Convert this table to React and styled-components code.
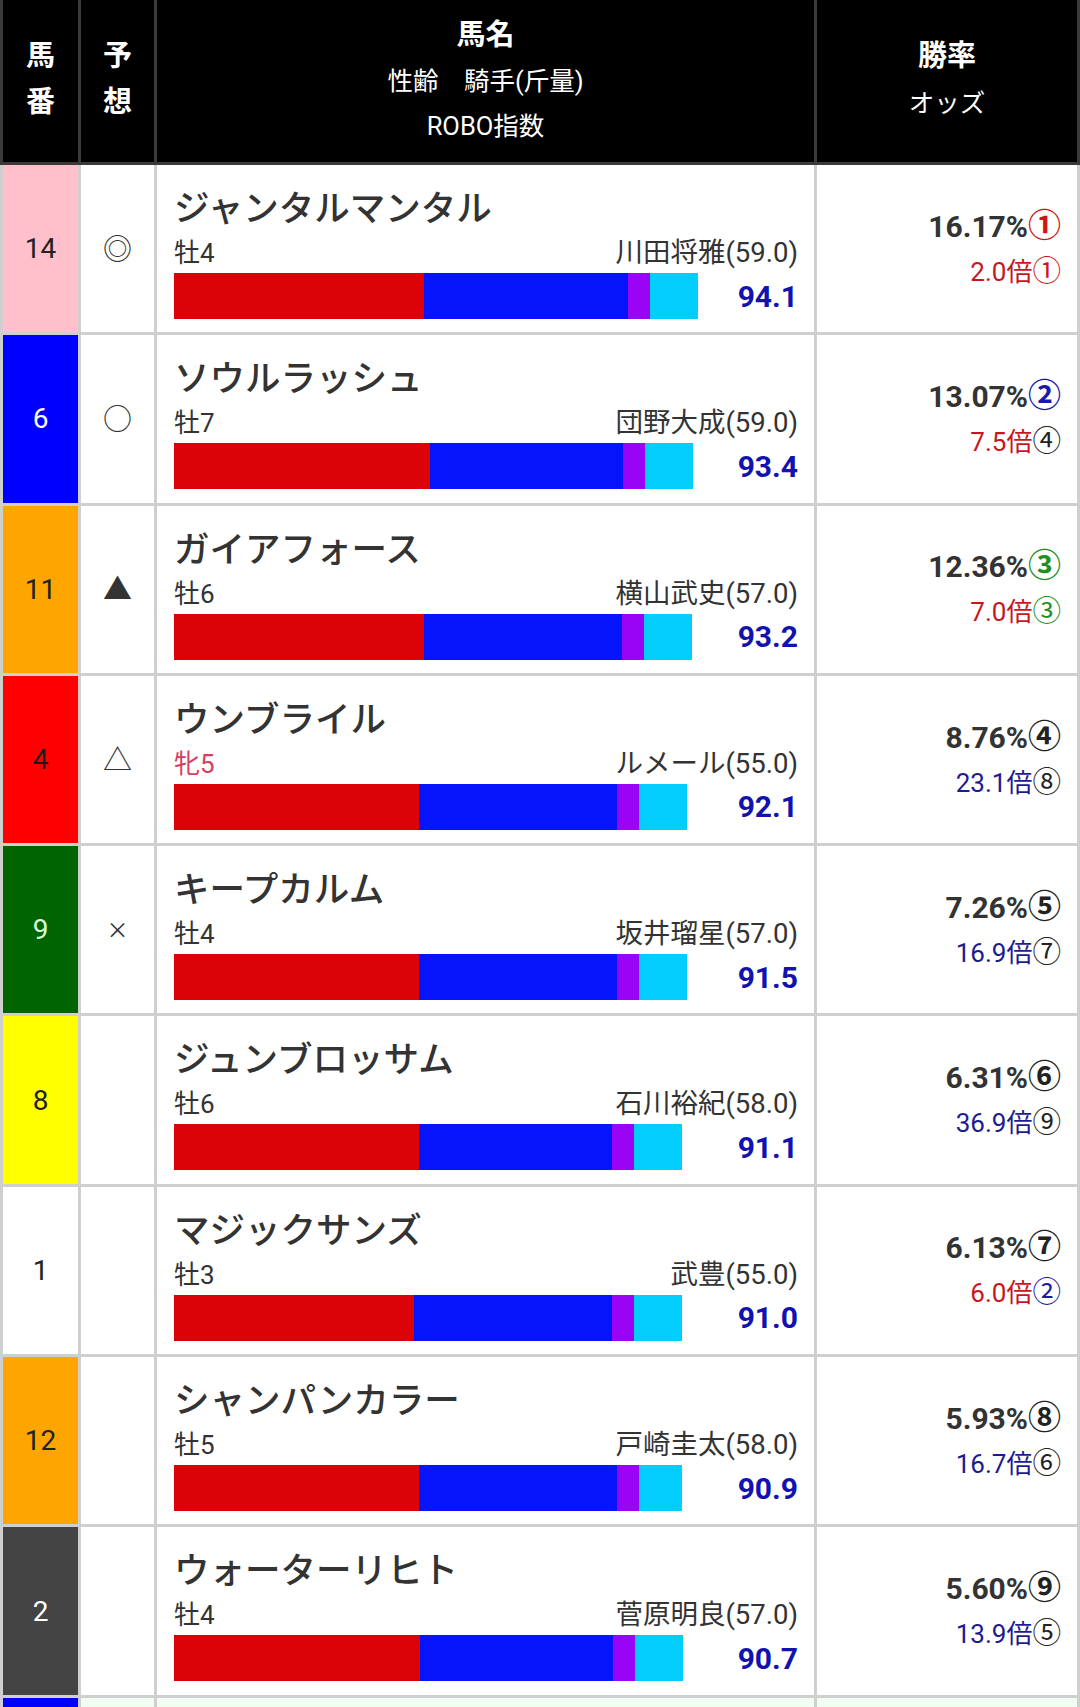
import styled, { createGlobalStyle } from 'styled-components'

const GlobalStyle = createGlobalStyle`
  body {
    margin: 0;
    background: #fff;
    font-family: Roboto, "Noto Sans CJK JP", sans-serif;
  }
`

const COLS = '75px 73px 657px 260px'

const FRAMES = {
  pink: { bg: '#ffc0cb', fg: '#222' },
  blue: { bg: '#0000ff', fg: '#fff' },
  orange: { bg: '#ffa500', fg: '#222' },
  red: { bg: '#ff0000', fg: '#1a1a1a' },
  green: { bg: '#006400', fg: '#d8ffd8' },
  yellow: { bg: '#ffff00', fg: '#222' },
  white: { bg: '#ffffff', fg: '#222' },
  black: { bg: '#444444', fg: '#fff' },
}

const RANK_COLORS = { 1: '#d01515', 2: '#1a1aa8', 3: '#1f8f1f' }

const horses = [
  { no: 14, frame: 'pink', mark: '◎', name: 'ジャンタルマンタル', sex: '牡4', jockey: '川田将雅(59.0)', score: '94.1', bars: [250, 204, 22, 48], rate: '16.17%', rank: 1, odds: 2.0, pop: 1 },
  { no: 6, frame: 'blue', mark: '○', name: 'ソウルラッシュ', sex: '牡7', jockey: '団野大成(59.0)', score: '93.4', bars: [256, 193, 22, 48], rate: '13.07%', rank: 2, odds: 7.5, pop: 4 },
  { no: 11, frame: 'orange', mark: '▲', name: 'ガイアフォース', sex: '牡6', jockey: '横山武史(57.0)', score: '93.2', bars: [250, 198, 22, 48], rate: '12.36%', rank: 3, odds: 7.0, pop: 3 },
  { no: 4, frame: 'red', mark: '△', name: 'ウンブライル', sex: '牝5', jockey: 'ルメール(55.0)', score: '92.1', bars: [245, 198, 22, 48], rate: '8.76%', rank: 4, odds: 23.1, pop: 8 },
  { no: 9, frame: 'green', mark: '×', name: 'キープカルム', sex: '牡4', jockey: '坂井瑠星(57.0)', score: '91.5', bars: [245, 198, 22, 48], rate: '7.26%', rank: 5, odds: 16.9, pop: 7 },
  { no: 8, frame: 'yellow', mark: '', name: 'ジュンブロッサム', sex: '牡6', jockey: '石川裕紀(58.0)', score: '91.1', bars: [245, 193, 22, 48], rate: '6.31%', rank: 6, odds: 36.9, pop: 9 },
  { no: 1, frame: 'white', mark: '', name: 'マジックサンズ', sex: '牡3', jockey: '武豊(55.0)', score: '91.0', bars: [240, 198, 22, 48], rate: '6.13%', rank: 7, odds: 6.0, pop: 2 },
  { no: 12, frame: 'orange', mark: '', name: 'シャンパンカラー', sex: '牡5', jockey: '戸崎圭太(58.0)', score: '90.9', bars: [245, 198, 22, 43], rate: '5.93%', rank: 8, odds: 16.7, pop: 6 },
  { no: 2, frame: 'black', mark: '', name: 'ウォーターリヒト', sex: '牡4', jockey: '菅原明良(57.0)', score: '90.7', bars: [246, 193, 22, 48], rate: '5.60%', rank: 9, odds: 13.9, pop: 5 },
]

const BAR_COLORS = ['#dc0308', '#0514fa', '#9a04f6', '#02cdfb']

const circled = n => String.fromCharCode(0x2460 + n - 1)

const Table = styled.div`
  width: 1080px;
`

const HeaderRow = styled.div`
  display: grid;
  grid-template-columns: ${COLS};
  column-gap: 3px;
  background: #3a3a3a;
  padding: 0 3px 3px 3px;
  height: 165px;
  box-sizing: border-box;
`

const HeadCell = styled.div`
  background: #000;
  color: #fff;
  display: flex;
  flex-direction: column;
  align-items: center;
  justify-content: center;
  line-height: ${props => props.$lh || 46}px;
  padding-bottom: ${props => props.$pb || 0}px;
`

const HeadTitle = styled.div`
  font-family: "Noto Sans CJK JP", sans-serif;
  font-size: 29px;
  font-weight: 700;
  margin-bottom: ${props => props.$mb || 0}px;
`

const HeadSub = styled.div`
  font-size: 25.5px;
  font-weight: 400;
  white-space: pre;
`

const Row = styled.div`
  display: grid;
  grid-template-columns: ${COLS};
  column-gap: 3px;
  background: #cfcfcf;
  padding: 0 3px 3px 3px;
  height: 170.3px;
  box-sizing: border-box;
`

const Cell = styled.div`
  background: ${props => props.$bg || '#fff'};
  min-width: 0;
`

const FrameCell = styled(Cell)`
  display: flex;
  align-items: center;
  justify-content: center;
  color: ${props => props.$fg};
  font-size: 28px;
`

const MarkCell = styled(Cell)`
  display: flex;
  align-items: center;
  justify-content: center;
  font-family: "Noto Sans CJK JP", sans-serif;
  font-size: ${props => (props.$small ? 22 : 29)}px;
  color: #333;
  padding-bottom: 4px;
`

const HorseCell = styled(Cell)`
  padding: 17px 16px 0 17px;
  color: #333;
`

const HorseName = styled.div`
  font-family: "Noto Sans CJK JP", sans-serif;
  font-size: 35.5px;
  font-weight: 500;
  line-height: 48px;
  white-space: nowrap;
`

const InfoLine = styled.div`
  display: flex;
  justify-content: space-between;
  align-items: center;
  margin-top: 7px;
  height: 32px;
  font-size: 26px;
  line-height: 32px;
`

const Sex = styled.span`
  color: ${props => (props.$female ? '#d6405f' : '#333')};
`

const Jockey = styled.span`
  font-size: 27.5px;
`

const BarLine = styled.div`
  display: flex;
  justify-content: space-between;
  align-items: center;
  margin-top: 4px;
`

const Bar = styled.div`
  display: flex;
  height: 46px;
`

const Segment = styled.div`
  height: 100%;
  background: ${props => props.$color};
`

const Score = styled.span`
  font-size: 30px;
  font-weight: 700;
  color: #1212b0;
`

const RateCell = styled(Cell)`
  display: flex;
  flex-direction: column;
  align-items: flex-end;
  justify-content: center;
  padding: 4px 16px 0 0;
`

const Rate = styled.div`
  font-size: 30px;
  font-weight: 700;
  color: #333;
  line-height: 40px;
`

const Odds = styled.div`
  font-size: 26px;
  line-height: 45px;
  padding-top: 3px;
  color: ${props => props.$color};
`

const Circle = styled.span`
  font-family: "Noto Sans CJK JP", sans-serif;
  font-size: 1.1em;
  line-height: 0;
  color: ${props => props.$color};
  font-weight: ${props => (props.$bold ? 700 : 400)};
`

const HorseRow = ({ h }) => {
  const frame = FRAMES[h.frame]
  return (
    <Row>
      <FrameCell $bg={frame.bg} $fg={frame.fg}>{h.no}</FrameCell>
      <MarkCell $small={h.mark === '×'}>{h.mark}</MarkCell>
      <HorseCell>
        <HorseName>{h.name}</HorseName>
        <InfoLine>
          <Sex $female={h.sex.startsWith('牝')}>{h.sex}</Sex>
          <Jockey>{h.jockey}</Jockey>
        </InfoLine>
        <BarLine>
          <Bar>
            {h.bars.map((w, i) => (
              <Segment key={i} $color={BAR_COLORS[i]} style={{ width: w }} />
            ))}
          </Bar>
          <Score>{h.score}</Score>
        </BarLine>
      </HorseCell>
      <RateCell>
        <Rate>
          {h.rate}
          <Circle $bold $color={RANK_COLORS[h.rank] || '#222'}>{circled(h.rank)}</Circle>
        </Rate>
        <Odds $color={h.odds < 10 ? '#c8161e' : '#1c1c90'}>
          {h.odds.toFixed(1)}倍
          <Circle $color={RANK_COLORS[h.pop] || '#222'}>{circled(h.pop)}</Circle>
        </Odds>
      </RateCell>
    </Row>
  )
}

const App = () => {
  return (
    <>
      <GlobalStyle />
      <Table>
        <HeaderRow>
          <HeadCell $pb={10}>
            <HeadTitle>馬</HeadTitle>
            <HeadTitle>番</HeadTitle>
          </HeadCell>
          <HeadCell $pb={10}>
            <HeadTitle>予</HeadTitle>
            <HeadTitle>想</HeadTitle>
          </HeadCell>
          <HeadCell $lh={45} $pb={4}>
            <HeadTitle $mb={4}>馬名</HeadTitle>
            <HeadSub>{'性齢　騎手(斤量)'}</HeadSub>
            <HeadSub>ROBO指数</HeadSub>
          </HeadCell>
          <HeadCell $lh={50} $pb={6}>
            <HeadTitle>勝率</HeadTitle>
            <HeadSub>オッズ</HeadSub>
          </HeadCell>
        </HeaderRow>
        {horses.map(h => (
          <HorseRow key={h.no} h={h} />
        ))}
        <Row>
          <Cell $bg="#0000ff" />
          <Cell $bg="#f1fdf0" />
          <Cell $bg="#f1fdf0" />
          <Cell $bg="#f1fdf0" />
        </Row>
      </Table>
    </>
  )
}

export default App
